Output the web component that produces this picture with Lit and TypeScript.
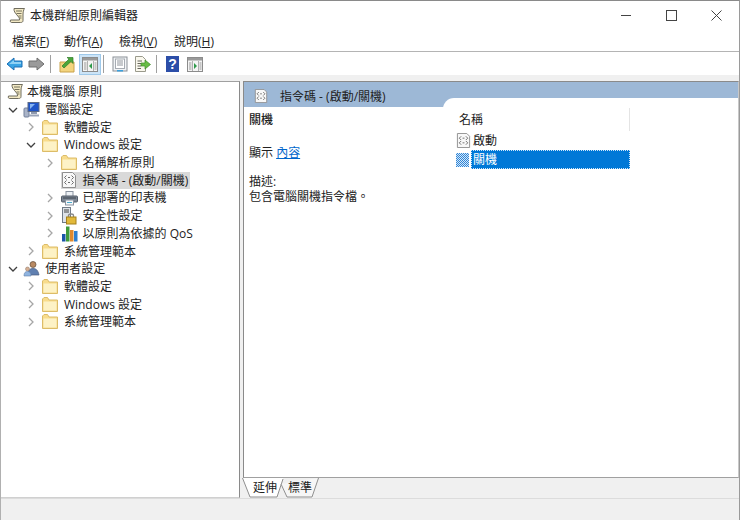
import { LitElement, html, css, svg } from "lit";
import { customElement } from "lit/decorators.js";

const folder = svg`<svg width="16" height="15" viewBox="0 0 16 15"><path d="M.5 2V14.500H15.500V3H7L5.500 .5H2Z" fill="#f8dc8c" stroke="#dcbc68"/><path d="M1.500 4.500H14.500V13.500H1.500Z" fill="#fdf2c6"/></svg>`;
const scroll = svg`<svg width="17" height="17" viewBox="0 0 17 17"><path d="M5 1.500H15.500C14.500 3 14 5 14 8V13.500C14 15 13 15.500 11.500 15.500H2.500C1.500 15.500 1 14.500 1.500 13H10.500C11 9 4.500 7 5 1.500Z" fill="#f3e9c4" stroke="#6f6c5e"/><path d="M7 4H13M7.500 6.500H12.500M9.500 9H12.500M10 11H12.500" stroke="#77745f"/></svg>`;
const computer = svg`<svg width="17" height="17" viewBox="0 0 17 17"><rect x="1" y="7" width="5" height="9" rx="1" fill="#aab4c8" stroke="#73809a"/><rect x="5" y="1.500" width="11" height="9" fill="#1f55c8" stroke="#5c6a86"/><path d="M7 3L12 3L7 8Z" fill="#86b4f2"/><rect x="8" y="11" width="6" height="2" fill="#8f9ab0"/><path d="M6 14.500H16" stroke="#9aa4b8" stroke-width="2"/></svg>`;
const users = svg`<svg width="17" height="17" viewBox="0 0 17 17"><circle cx="10" cy="4.500" r="3" fill="#b98a62" stroke="#5f4a3a" stroke-width=".7"/><path d="M5 15C5 10 7 8.500 10 8.500S15 10 16 15Z" fill="#5f7fb0" stroke="#4a5d80" stroke-width=".7"/><circle cx="4.500" cy="9" r="2" fill="#d5b094" stroke="#8a7060" stroke-width=".5"/><path d="M1 16C1 12.500 2.500 11.500 4.500 11.500S8 12.500 8 16Z" fill="#8fb4e0" stroke="#6380a8" stroke-width=".6"/></svg>`;
const script = (h = 16) => svg`<svg width="${h}" height="${h}" viewBox="0 0 16 16"><path d="M1.500 .5H11.500L14.500 3.500V15.500H1.500Z" fill="#f8f8f8" stroke="#8f8f8f"/><path d="M5.500 3.500L3.500 5.500L5.500 7.500M10.500 3.500L12.500 5.500L10.500 7.500M5.500 8.500L3.500 10.500L5.500 12.500M10.500 8.500L12.500 10.500L10.500 12.500M7 5.500H9M7 10.500H9" fill="none" stroke="#5c5c5c" stroke-width=".9"/></svg>`;
const printer = svg`<svg width="17" height="16" viewBox="0 0 17 16"><rect x="5" y="1.500" width="7" height="5" fill="#eef2f6" stroke="#8a93a0"/><rect x=".5" y="6" width="16" height="6" rx="1" fill="#7d8794" stroke="#565f6b"/><path d="M2 8H15" stroke="#3d454f"/><rect x="4.500" y="10" width="8" height="5" fill="#f4f7fa" stroke="#8a93a0"/><rect x="6" y="12" width="5" height="1" fill="#49a7c9"/></svg>`;
const security = svg`<svg width="15" height="18" viewBox="0 0 15 18"><rect x=".5" y=".5" width="8" height="15" fill="#dde2e8" stroke="#717b87"/><path d="M2 3H7M2 5H7" stroke="#444"/><path d="M6.500 10V8.500C6.500 6.500 11.500 6.500 11.500 8.500V10" fill="none" stroke="#8a8a8a" stroke-width="1.300"/><rect x="4.500" y="10" width="9.500" height="7" fill="#e2b93a" stroke="#a4801d"/></svg>`;
const qos = svg`<svg width="17" height="17" viewBox="0 0 17 17"><rect x="1" y="9" width="3.500" height="7.500" fill="#1a55a8"/><rect x="5" y="1.500" width="3.500" height="15" fill="#3e9a3a"/><rect x="9" y="5" width="3.500" height="11.500" fill="#e08a2e"/><rect x="13" y="6" width="3.500" height="10.500" fill="#2e7fd0"/></svg>`;
const chevR = svg`<svg width="8" height="10" viewBox="0 0 8 10"><path d="M2 1L6 5L2 9" fill="none" stroke="#a6a6a6" stroke-width="1.300"/></svg>`;
const chevD = svg`<svg width="10" height="8" viewBox="0 0 10 8"><path d="M1 2L5 6L9 2" fill="none" stroke="#404040" stroke-width="1.300"/></svg>`;

const back = svg`<svg width="17" height="14" viewBox="0 0 17 14"><path d="M1 7L8 1V4H16V10H8V13Z" fill="#39a4e4" stroke="#1a6fb5"/><path d="M3 7L8 3V5H15V7Z" fill="#8fd2f5"/></svg>`;
const fwd = svg`<svg width="17" height="14" viewBox="0 0 17 14"><path d="M16 7L9 1V4H1V10H9V13Z" fill="#9a9a9a" stroke="#6f6f6f"/></svg>`;
const up = svg`<svg width="17" height="17" viewBox="0 0 17 17"><path d="M1 6H15V16H1Z" fill="#f3d47e" stroke="#c9a24a"/><path d="M3 10L10 3L8 1.500H14V7.500L12 5.500L5 12Z" fill="#4aa63a" stroke="#2f7d28" stroke-width=".7"/></svg>`;
const pane = (fill: string, flip = false) => svg`<svg width="16" height="15" viewBox="0 0 16 15"><rect x=".5" y=".5" width="15" height="14" fill="#f4f4f4" stroke="#8c8c8c"/><rect x="1" y="1" width="14" height="2.500" fill="#9a9a9a"/><path d="M5.500 4V14M11.500 4V14" stroke="#b0b0b0"/><path d="M2 6H4.500M2 8H4.500M2 10H4.500M2 12H4.500M12.500 6H14.500M12.500 8H14.500M12.500 10H14.500M12.500 12H14.500" stroke="#9a9a9a"/><path d="${flip ? "M7 6L10 9L7 12Z" : "M10 6L7 9L10 12Z"}" fill="${fill}"/></svg>`;
const props = svg`<svg width="16" height="16" viewBox="0 0 16 16"><rect x="1" y="1" width="14" height="14" fill="#f2f4f6" stroke="#8a8f96"/><rect x="3.500" y="3" width="9" height="9.500" fill="#fff" stroke="#a6abb2"/><path d="M5 5H11M5 7H11M5 9H11" stroke="#8f949b"/><rect x="5" y="14" width="6" height="1.500" fill="#3aa0dc"/></svg>`;
const exportI = svg`<svg width="17" height="16" viewBox="0 0 17 16"><path d="M1.500 .5H8.500L11.500 3.500V15.500H1.500Z" fill="#faf8ee" stroke="#9a9a8c"/><path d="M3.500 5H8M3.500 7.500H7M3.500 10H7M3.500 12.500H7" stroke="#66665c"/><path d="M7 7H11V4L16.500 8.500L11 13V10H7Z" fill="#68bd45" stroke="#3f8d2a" stroke-width=".7"/></svg>`;
const help = svg`<svg width="13" height="16" viewBox="0 0 13 16"><rect width="13" height="16" fill="#2c4ea8"/><text x="6.500" y="13" text-anchor="middle" font-family="Liberation Sans, sans-serif" font-weight="700" font-size="14" fill="#fff">?</text></svg>`;

type Row = { t: string; l: number; c?: "r" | "d"; i: unknown; sel?: boolean };
const rows: Row[] = [
  { t: "本機電腦 原則", l: 0, i: scroll },
  { t: "電腦設定", l: 1, c: "d", i: computer },
  { t: "軟體設定", l: 2, c: "r", i: folder },
  { t: "Windows 設定", l: 2, c: "d", i: folder },
  { t: "名稱解析原則", l: 3, c: "r", i: folder },
  { t: "指令碼 - (啟動/關機)", l: 3, i: script(), sel: true },
  { t: "已部署的印表機", l: 3, c: "r", i: printer },
  { t: "安全性設定", l: 3, c: "r", i: security },
  { t: "以原則為依據的 QoS", l: 3, c: "r", i: qos },
  { t: "系統管理範本", l: 2, c: "r", i: folder },
  { t: "使用者設定", l: 1, c: "d", i: users },
  { t: "軟體設定", l: 2, c: "r", i: folder },
  { t: "Windows 設定", l: 2, c: "r", i: folder },
  { t: "系統管理範本", l: 2, c: "r", i: folder },
];

@customElement("app-root")
export class AppRoot extends LitElement {
  static styles = css`
    :host { display: block; width: 740px; height: 520px; }
    .win { width: 740px; height: 520px; box-sizing: border-box; display: flex; flex-direction: column; background: #f0f0f0; border-top: 1px solid #8a8a8a; border-right: 1px solid #9a9a9a; border-left: 1px solid #b0b0b0; color: #222; font-family: "Open Sans", "Noto Sans CJK TC", sans-serif; font-size: 12px; overflow: hidden; }
    .title { height: 28px; background: #fff; display: flex; align-items: center; padding-left: 8px; flex: none; }
    .title .name { flex: 1; margin-left: 4px; }
    .ctl { width: 45px; height: 28px; display: flex; align-items: center; justify-content: center; }
    .menu { height: 23px; box-sizing: border-box; padding: 1px 0 0 11px; background: #fff; border-bottom: 1px solid #b4b4b4; display: flex; align-items: center; flex: none; }
    .menu span.m { width: 55px; white-space: nowrap; }
    .menu span.m:first-child { width: 52px; }
    .tools { height: 23px; box-sizing: border-box; padding: 1px 0 0 3px; background: #fff; display: flex; align-items: center; flex: none; }
    .tools > * { flex: none; }
    .tb { display: flex; align-items: center; justify-content: center; height: 21px; }
    .on { background: #cce4f7; border: 1px solid #9fc9ea; box-sizing: border-box; }
    .sep { width: 1px; height: 18px; background: #a0a0a0; }
    .gapband { height: 6px; flex: none; background: #f0f0f0; }
    .main { flex: 1; display: flex; min-height: 0; gap: 3px; }
    .tree { width: 239px; box-sizing: border-box; padding-top: 1px; background: #fff; border: 1px solid #a0a0a0; border-right-color: #8a8a8a; border-left: none; border-bottom-color: #d0d0d0; flex: none; }
    .row { height: 17.7px; display: flex; align-items: center; white-space: nowrap; }
    .chev { width: 11px; display: flex; justify-content: center; flex: none; margin-right: 5px; }
    .ic { width: 17px; display: flex; justify-content: center; align-items: center; flex: none; margin-right: 3px; }
    .row.top .ic { margin-right: 1px; }
    .lab { padding: 0 2px; line-height: 17px; height: 17px; }
    .row.sel .lab { background: #d9d9d9; }
    .row.sel .ic { background: #d9d9d9; margin-right: 0; padding-right: 3px; height: 17px; }
    .right { flex: 1; display: flex; flex-direction: column; min-width: 0; }
    .panel { flex: 1; display: flex; flex-direction: column; background: #fff; border: 1px solid #8a8a8a; border-right: 1px solid #c8c8c8; border-bottom: 1px solid #a0a0a0; min-height: 0; box-sizing: border-box; }
    .head { height: 25px; box-sizing: border-box; padding: 2px 0 0 10px; background: #9db8d6; display: flex; align-items: center; gap: 12px; flex: none; }
    .body { flex: 1; display: flex; min-height: 0; }
    .info { width: 199px; padding: 5px 5px 0; box-sizing: border-box; flex: none; line-height: 15px; }
    .info .ttl { margin-bottom: 18px; font-weight: 500; }
    .info a { color: #0066cc; text-decoration: underline; }
    .info .d { margin-top: 14px; }
    .list { flex: 1; margin-top: -9px; background: #fff; border-top-left-radius: 11px; padding-top: 10px; padding-left: 13px; position: relative; }
    .lh { width: 174px; height: 23px; box-sizing: border-box; border-right: 1px solid #e4e4e4; padding-left: 3px; line-height: 24px; }
    .li { display: flex; align-items: center; height: 19px; width: 174px; }
    .li .t { flex: 1; height: 19px; line-height: 20px; padding-left: 2px; box-sizing: border-box; }
    .li.s .t { background: #0078d7; color: #fff; outline: 1px dotted #cfe6fa; outline-offset: -1px; }
    .dith { width: 13px; height: 14px; background-image: repeating-conic-gradient(#2f86d8 0 25%, #d5e7f8 0 50%); background-size: 2px 2px; margin-right: 2px; }
    .tabs { height: 20px; flex: none; position: relative; display: flex; padding-left: 10px; gap: 11px; line-height: 19px; }
    .tabs svg { position: absolute; left: -1px; top: 0; }
    .tabs span { position: relative; }
    .status { height: 22px; flex: none; background: #f0f0f0; border-top: 1px solid #dcdcdc; box-sizing: border-box; }
    u { text-underline-offset: 1px; }
  `;

  render() {
    return html`<div class="win">
      <div class="title">
        <span style="display:flex">${scroll}</span><span class="name">本機群組原則編輯器</span>
        <span class="ctl"><svg width="11" height="11" viewBox="0 0 11 11"><path d="M0 5.500H10" stroke="#444"/></svg></span>
        <span class="ctl"><svg width="11" height="11" viewBox="0 0 11 11"><rect x=".5" y=".5" width="10" height="10" fill="none" stroke="#444"/></svg></span>
        <span class="ctl"><svg width="11" height="11" viewBox="0 0 11 11"><path d="M.5.5L10.500 10.500M10.500.5L.5 10.500" stroke="#444"/></svg></span>
      </div>
      <div class="menu">
        <span class="m">檔案(<u>F</u>)</span><span class="m">動作(<u>A</u>)</span><span class="m">檢視(<u>V</u>)</span><span class="m">說明(<u>H</u>)</span>
      </div>
      <div class="tools">
        <span class="tb" style="width:21px">${back}</span>
        <span class="tb" style="width:22px">${fwd}</span>
        <span class="tb" style="width:3px"></span><span class="sep"></span>
        <span class="tb" style="width:5px"></span>
        <span class="tb" style="width:22px">${up}</span>
        <span class="tb" style="width:1px"></span>
        <span class="tb on" style="width:22px">${pane("#2e9a4a")}</span>
        <span class="tb" style="width:2px"></span><span class="sep"></span>
        <span class="tb" style="width:4px"></span>
        <span class="tb" style="width:23px">${props}</span>
        <span class="tb" style="width:22px">${exportI}</span>
        <span class="tb" style="width:3px"></span><span class="sep"></span>
        <span class="tb" style="width:5px"></span>
        <span class="tb" style="width:21px">${help}</span>
        <span class="tb" style="width:1px"></span>
        <span class="tb" style="width:22px">${pane("#2e9a4a", true)}</span>
      </div>
      <div class="gapband"></div>
      <div class="main">
        <div class="tree">
          ${rows.map((r) => html`<div class="row ${r.sel ? "sel" : ""} ${r.l === 0 ? "top" : ""}" style="padding-left:${r.l === 0 ? 6 : r.l * 18.7 - 12.5}px">
            ${r.l === 0 ? "" : html`<span class="chev">${r.c === "r" ? chevR : r.c === "d" ? chevD : ""}</span>`}
            <span class="ic">${r.i}</span><span class="lab">${r.t}</span></div>`)}
        </div>
        <div class="right">
          <div class="panel">
            <div class="head"><span style="display:flex">${script(14)}</span><span>指令碼 - (啟動/關機)</span></div>
            <div class="body">
              <div class="info">
                <div class="ttl">關機</div>
                <div>顯示 <a>內容</a></div>
                <div class="d">描述:</div>
                <div>包含電腦關機指令檔。</div>
              </div>
              <div class="list">
                <div class="lh">名稱</div>
                <div class="li"><span style="display:flex">${script(15)}</span><span class="t">啟動</span></div>
                <div class="li s"><span class="dith"></span><span class="t">關機</span></div>
              </div>
            </div>
          </div>
          <div class="tabs">
            <svg width="100" height="20" viewBox="0 0 100 20"><path d="M.5 0L8 19H35L41 0Z" fill="#fff"/><path d="M.5 0L8 19H35L41 1" fill="none" stroke="#8f8f8f"/><path d="M39 6L45 19H70L76.500 0" fill="#f6f6f6" stroke="#8f8f8f"/></svg>
            <span>延伸</span><span>標準</span>
          </div>
        </div>
      </div>
      <div class="status"></div>
    </div>`;
  }
}
